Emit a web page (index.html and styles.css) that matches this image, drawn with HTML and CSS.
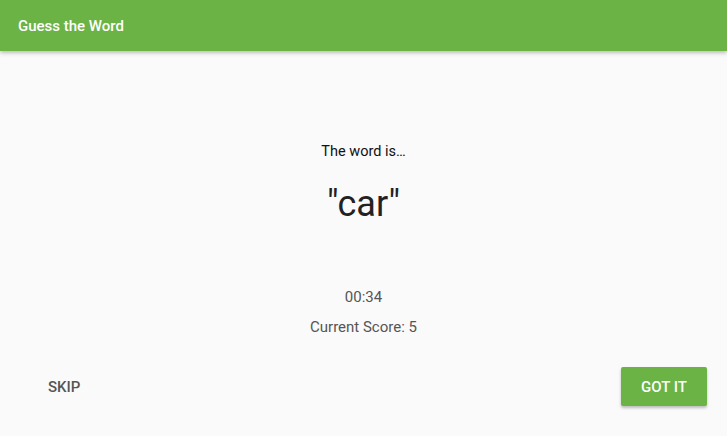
FILE: index.html
```html
<!DOCTYPE html>
<html>
<head>
<meta charset="utf-8">
<link rel="stylesheet" href="styles.css">
</head>
<body>
<header class="toolbar"><span class="title">Guess the Word</span></header>
<main class="content">
  <div class="word-block">
    <div class="label">The word is…</div>
    <div class="word">"car"</div>
  </div>
  <div class="stats">
    <div class="timer">00:34</div>
    <div class="score">Current Score: 5</div>
  </div>
  <div class="actions">
    <button class="btn btn-text">SKIP</button>
    <button class="btn btn-primary">GOT IT</button>
  </div>
</main>
</body>
</html>
```
FILE: styles.css
```css
* { box-sizing: border-box; }
html, body { margin: 0; padding: 0; }
body {
  width: 727px;
  height: 436px;
  background: #fafafa;
  font-family: Roboto, "Noto Sans", sans-serif;
  overflow: hidden;
  display: flex;
  flex-direction: column;
}
.toolbar {
  height: 51px;
  background: #6ab344;
  display: flex;
  align-items: center;
  padding-left: 18px;
  box-shadow: 0 2px 4px rgba(0,0,0,0.25);
  position: relative;
  z-index: 1;
}
.title {
  color: #fff;
  font-size: 15px;
  font-weight: 500;
}
.content {
  flex: 1;
  display: flex;
  flex-direction: column;
  align-items: center;
}
.word-block {
  margin-top: 91px;
  display: flex;
  flex-direction: column;
  align-items: center;
}
.label {
  font-size: 14.5px;
  color: #111;
  line-height: 20px;
}
.word {
  font-size: 36px;
  color: #222;
  line-height: 42px;
  margin-top: 21px;
}
.stats {
  margin-top: 62px;
  display: flex;
  flex-direction: column;
  align-items: center;
  color: #555;
  font-size: 15px;
  line-height: 20px;
}
.score { margin-top: 10px; }
.actions {
  margin-top: 30px;
  width: 100%;
  display: flex;
  justify-content: space-between;
  padding: 0 20px 0 30px;
}
.btn {
  font-family: Roboto, sans-serif;
  font-size: 15px;
  font-weight: 500;
  border: none;
  height: 39px;
  border-radius: 2px;
  padding: 0 18px;
  cursor: pointer;
}
.btn-text {
  background: transparent;
  color: #555;
}
.btn-primary {
  background: #6ab344;
  color: #fff;
  width: 86px;
  padding: 0;
  box-shadow: 0 2px 3px rgba(0,0,0,0.25);
}
```
